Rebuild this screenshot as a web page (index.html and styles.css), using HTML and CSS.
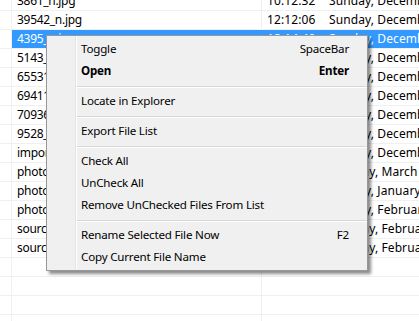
FILE: index.html
```html
<!DOCTYPE html>
<html lang="en">
<head>
    <meta charset="UTF-8">
    <meta name="viewport" content="width=device-width, initial-scale=1.0">
    <title>File List</title>
    <link rel="stylesheet" href="styles.css">
</head>
<body>
    <div class="list">
        <div class="row"><div class="check"></div><div class="name">3861_n.jpg</div><div class="date"><span class="time">10:12:32</span>Sunday, December 16, 2018</div></div>
        <div class="row"><div class="check"></div><div class="name">39542_n.jpg</div><div class="date"><span class="time">12:12:06</span>Sunday, December 16, 2018</div></div>
        <div class="row selected"><div class="check"></div><div class="name">4395_n.jpg</div><div class="date"><span class="time">12:14:40</span>Sunday, December 16, 2018</div></div>
        <div class="row"><div class="check"></div><div class="name">5143_n.jpg</div><div class="date"><span class="time">12:15:02</span>Sunday, December 16, 2018</div></div>
        <div class="row"><div class="check"></div><div class="name">65531_n.jpg</div><div class="date"><span class="time">12:15:44</span>Sunday, December 16, 2018</div></div>
        <div class="row"><div class="check"></div><div class="name">69411_n.jpg</div><div class="date"><span class="time">12:16:10</span>Sunday, December 16, 2018</div></div>
        <div class="row"><div class="check"></div><div class="name">70936_n.jpg</div><div class="date"><span class="time">12:17:38</span>Sunday, December 16, 2018</div></div>
        <div class="row"><div class="check"></div><div class="name">9528_n.jpg</div><div class="date"><span class="time">12:18:21</span>Sunday, December 16, 2018</div></div>
        <div class="row"><div class="check"></div><div class="name">important.png</div><div class="date"><span class="time">09:41:03</span>Sunday, December 23, 2018</div></div>
        <div class="row"><div class="check"></div><div class="name">photo_01.jpg</div><div class="date"><span class="time">18:02:55</span>Monday, March 4, 2019</div></div>
        <div class="row"><div class="check"></div><div class="name">photo_02.jpg</div><div class="date"><span class="time">08:30:12</span>Sunday, January 6, 2019</div></div>
        <div class="row"><div class="check"></div><div class="name">photo_03.jpg</div><div class="date"><span class="time">14:11:47</span>Sunday, February 3, 2019</div></div>
        <div class="row"><div class="check"></div><div class="name">source_1.txt</div><div class="date"><span class="time">16:45:20</span>Monday, February 11, 2019</div></div>
        <div class="row"><div class="check"></div><div class="name">source_2.txt</div><div class="date"><span class="time">16:46:09</span>Monday, February 11, 2019</div></div>
        <div class="row"><div class="check"></div><div class="name"></div><div class="date"></div></div>
        <div class="row"><div class="check"></div><div class="name"></div><div class="date"></div></div>
        <div class="row"><div class="check"></div><div class="name"></div><div class="date"></div></div>
        <div class="row"><div class="check"></div><div class="name"></div><div class="date"></div></div>
    </div>

    <div class="menu">
        <div class="item"><span>Toggle</span><span>SpaceBar</span></div>
        <div class="item bold"><span>Open</span><span>Enter</span></div>
        <div class="sep"></div>
        <div class="item"><span>Locate in Explorer</span></div>
        <div class="sep"></div>
        <div class="item"><span>Export File List</span></div>
        <div class="sep"></div>
        <div class="item"><span>Check All</span></div>
        <div class="item"><span>UnCheck All</span></div>
        <div class="item"><span>Remove UnChecked Files From List</span></div>
        <div class="sep"></div>
        <div class="item"><span>Rename Selected File Now</span><span>F2</span></div>
        <div class="item"><span>Copy Current File Name</span></div>
    </div>
</body>
</html>
```

FILE: styles.css
```css
body {
    margin: 0;
    font-family: "Noto Sans", "Open Sans", sans-serif;
    font-size: 12px;
    color: #000;
    background: #fff;
    overflow: hidden;
}
.list {
    margin-top: -8px;
    letter-spacing: 0.1px;
}
.row {
    display: flex;
    height: 18px;
    line-height: 18px;
    border-bottom: 1px solid #f0f0f0;
    white-space: nowrap;
}
.check {
    width: 11px;
    flex: none;
    border-right: 1px solid #f0f0f0;
}
.name {
    width: 244px;
    flex: none;
    padding-left: 5px;
    border-right: 1px solid #f0f0f0;
    overflow: hidden;
    letter-spacing: -0.3px;
}
.date {
    flex: 1;
    padding-left: 5px;
    overflow: hidden;
}
.time {
    display: inline-block;
    width: 62px;
}
.selected .name,
.selected .date {
    background: #3399ff;
    color: #fff;
    border-color: #3399ff;
}

.menu {
    position: absolute;
    left: 46px;
    top: 35px;
    width: 320px;
    padding: 2px 0;
    border: 1px solid #979797;
    background: linear-gradient(to right, #f0f0f0 28px, #e2e3e3 28px, #e2e3e3 29px, #fff 29px, #fff 30px, #f0f0f0 30px);
    box-shadow: 3px 3px 3px rgba(0, 0, 0, 0.45);
    font-size: 11.6px;
    letter-spacing: -0.2px;
}
.item {
    display: flex;
    justify-content: space-between;
    height: 22px;
    line-height: 22px;
    padding: 0 18px 0 34px;
}
.bold {
    font-weight: bold;
}
.sep {
    height: 8px;
    margin-left: 30px;
    box-sizing: border-box;
    padding-top: 4px;
}
.sep::before {
    content: "";
    display: block;
    height: 1px;
    background: #d7d7d7;
    border-bottom: 1px solid #fff;
}
```
